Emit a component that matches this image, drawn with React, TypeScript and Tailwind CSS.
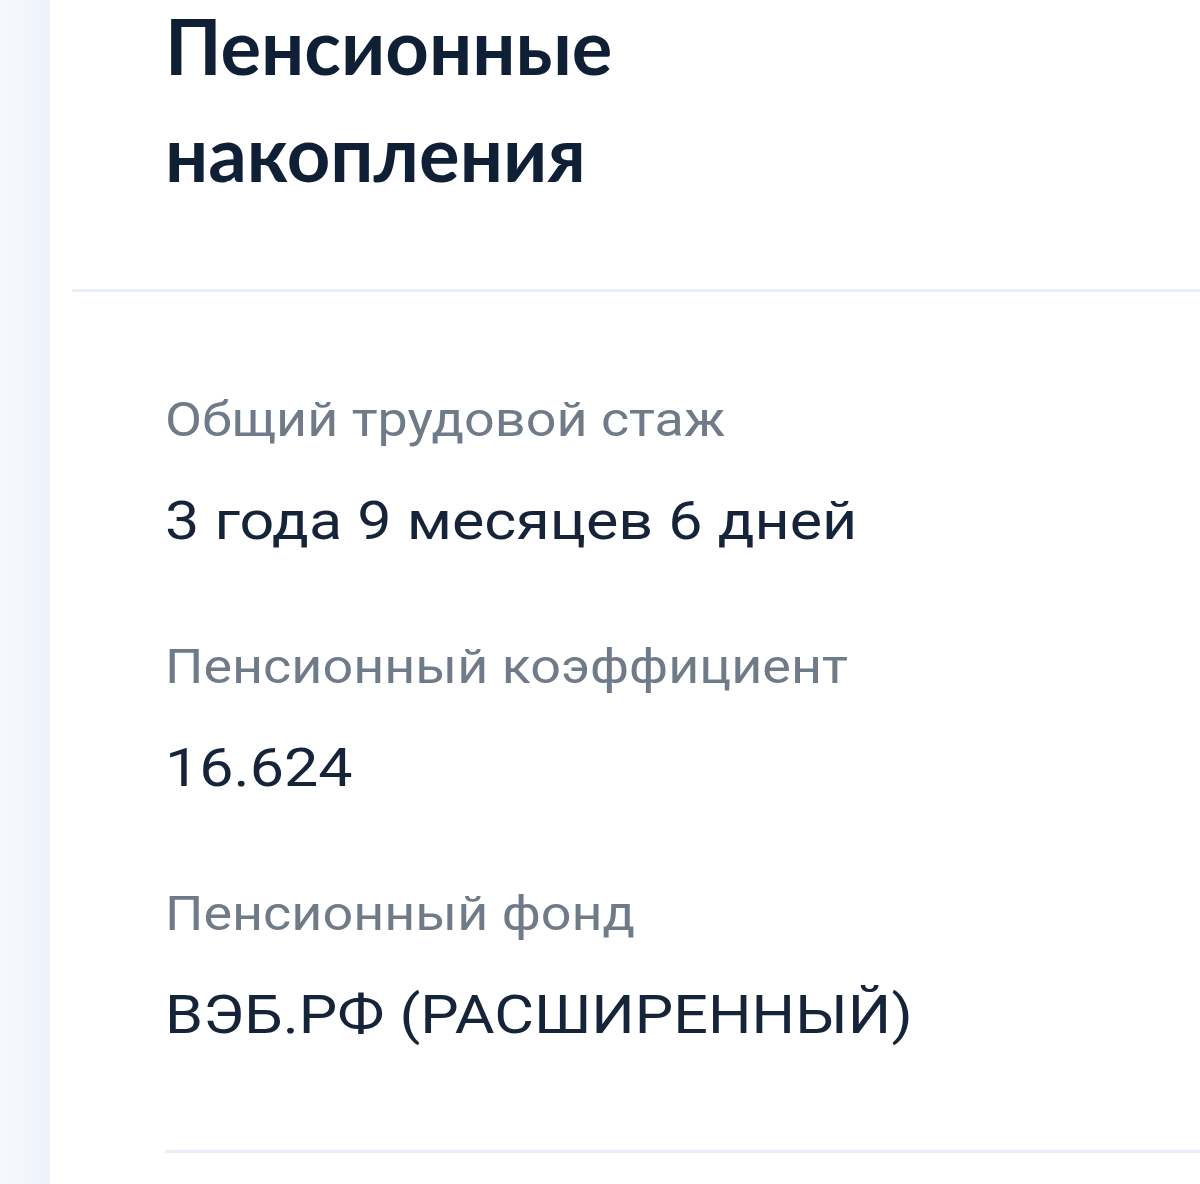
export default function App() {
  const items = [
    { label: "Общий трудовой стаж", value: "3 года 9 месяцев 6 дней" },
    { label: "Пенсионный коэффициент", value: "16.624" },
    { label: "Пенсионный фонд", value: "ВЭБ.РФ (РАСШИРЕННЫЙ)" },
  ];
  return (
    <div className="flex h-[1184px] w-[1200px] overflow-hidden bg-white">
      <div className="w-[50px] shrink-0 bg-gradient-to-r from-[#f7f9fd] to-[#eef2fa]" />
      <div className="flex flex-1 flex-col">
        <h1
          className="flex flex-col gap-[15px] pl-[115px] text-[76px] font-bold leading-[92px] text-[#0f1f36]"
          style={{ fontFamily: "Lato, sans-serif" }}
        >
          <span>Пенсионные</span>
          <span>накопления</span>
        </h1>
        <div className="ml-[22px] mt-[90px] h-[3px] bg-[#e9eefb]" />
        <div className="flex flex-col gap-[84px] pl-[115px] pt-[98px]" style={{ fontFamily: "Roboto, sans-serif" }}>
          {items.map((it) => (
            <div key={it.label} className="flex flex-col gap-[39px]">
              <div className="origin-left scale-x-[1.1] whitespace-nowrap text-[49px] leading-[60px] text-[#6f7b88]">
                {it.label}
              </div>
              <div className="origin-left scale-x-[1.13] whitespace-nowrap text-[54px] leading-[64px] text-[#16243a]">
                {it.value}
              </div>
            </div>
          ))}
        </div>
        <div className="ml-[115px] mt-[103px] h-[3px] bg-[#e9eefb]" />
      </div>
    </div>
  );
}
